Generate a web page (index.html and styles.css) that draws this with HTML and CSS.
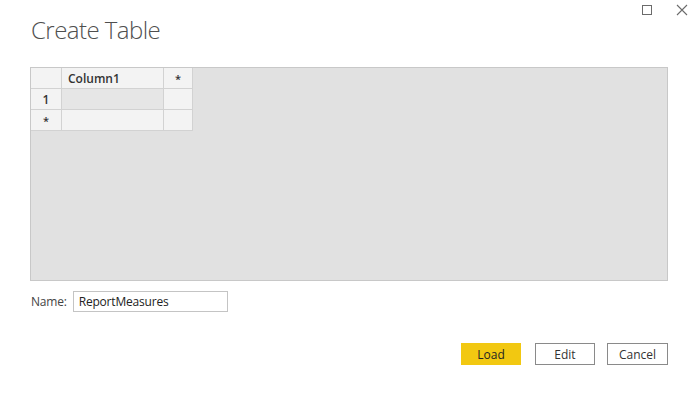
FILE: index.html
```html
<!DOCTYPE html>
<html lang="en">
<head>
  <meta charset="UTF-8">
  <title>Create Table</title>
  <link rel="stylesheet" href="styles.css">
</head>
<body>

  <!-- window buttons -->
  <div class="window-controls">
    <svg class="win-btn" width="12" height="12" viewBox="0 0 12 12">
      <rect x="1.5" y="1.5" width="9" height="9" fill="none" stroke="#6b6b6b" stroke-width="1"/>
    </svg>
    <svg class="win-btn" width="12" height="12" viewBox="0 0 12 12">
      <path d="M1 1 L11 11 M11 1 L1 11" stroke="#6b6b6b" stroke-width="1.1"/>
    </svg>
  </div>

  <div class="dialog">
    <h1 class="title">Create Table</h1>

    <div class="grid-area">
      <table class="data-grid">
        <tr>
          <th class="row-head"></th>
          <th class="col-main">Column1</th>
          <th class="col-add">*</th>
        </tr>
        <tr>
          <th class="row-head">1</th>
          <td class="cell selected"></td>
          <td class="cell"></td>
        </tr>
        <tr>
          <th class="row-head star">*</th>
          <td class="cell"></td>
          <td class="cell"></td>
        </tr>
      </table>
    </div>

    <div class="name-row">
      <label for="tableName">Name:</label>
      <input id="tableName" type="text" value="ReportMeasures">
    </div>

    <div class="actions">
      <button class="btn primary">Load</button>
      <button class="btn edit">Edit</button>
      <button class="btn cancel">Cancel</button>
    </div>
  </div>

</body>
</html>
```

FILE: styles.css
```css
body {
  margin: 0;
  font-family: 'Open Sans', 'Noto Sans', sans-serif;
  background: #fff;
  color: #333;
}

.window-controls {
  display: flex;
  justify-content: flex-end;
  gap: 23px;
  padding: 4px 7px 0 0;
  height: 12px;
}

.win-btn {
  display: block;
}

.dialog {
  padding: 0 27px 0 30px;
}

.title {
  margin: -2px 0 0 1px;
  font-size: 24px;
  line-height: 32px;
  font-weight: 300;
  letter-spacing: -0.55px;
  color: #4f4f4f;
}

.grid-area {
  margin-top: 21px;
  height: 212px;
  background: #e1e1e1;
  border: 1px solid #c8c8c8;
}

.data-grid {
  border-collapse: separate;
  border-spacing: 0;
  font-size: 12px;
}

.data-grid th,
.data-grid td {
  height: 20px;
  padding: 0;
  background: #f3f3f3;
  border-right: 1px solid #d2d2d2;
  border-bottom: 1px solid #d2d2d2;
  color: #333;
}

.row-head {
  width: 30px;
  text-align: center;
  font-weight: 600;
}

.row-head.star {
  font-size: 11px;
}

.col-main {
  width: 95px;
  text-align: left;
  padding-left: 6px !important;
  font-weight: 600;
}

.col-add {
  width: 28px;
  text-align: center;
  font-weight: 600;
  font-size: 11px;
}

.data-grid td.selected {
  background: #e6e6e6;
}

.name-row {
  display: flex;
  align-items: center;
  gap: 6px;
  margin-top: 10px;
  padding-left: 1px;
  font-size: 12px;
}

.name-row label {
  color: #444;
  letter-spacing: -0.2px;
}

.name-row input {
  width: 155px;
  height: 21px;
  box-sizing: border-box;
  border: 1px solid #c4c4c4;
  padding: 0 5px;
  font-family: inherit;
  font-size: 12px;
  letter-spacing: -0.2px;
  color: #222;
  outline: none;
}

.actions {
  display: flex;
  justify-content: flex-end;
  margin-top: 31px;
}

.btn {
  width: 60px;
  height: 22px;
  box-sizing: border-box;
  border: 1px solid #8a8a8a;
  background: #fff;
  font-family: inherit;
  font-size: 12px;
  color: #333;
  padding: 0;
}

.btn.primary {
  background: #f2c811;
  border-color: #f2c811;
  color: #252423;
}

.btn.edit {
  margin-left: 14px;
}

.btn.cancel {
  width: 61px;
  margin-left: 12px;
}
```
